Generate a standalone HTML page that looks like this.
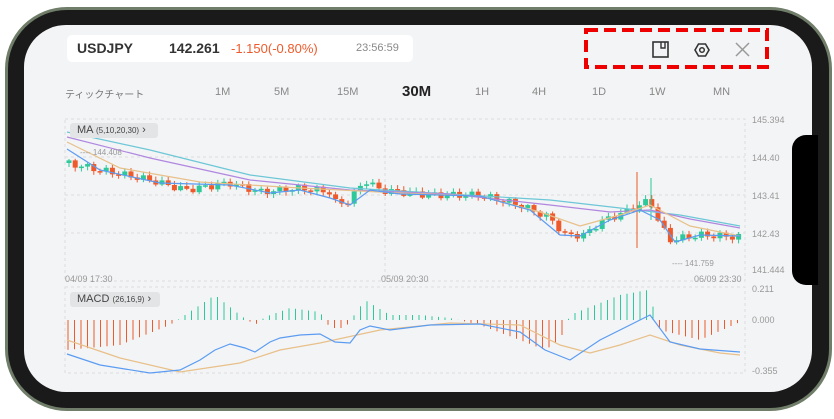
<!DOCTYPE html>
<html><head><meta charset="utf-8"><style>
*{margin:0;padding:0;box-sizing:border-box}
body{width:834px;height:419px;background:#fff;position:relative;overflow:hidden;font-family:"Liberation Sans","Noto Sans CJK JP",sans-serif}
.frame{position:absolute;left:5px;top:7px;width:827px;height:404px;border-radius:62px;background:#1a1a1a;border:3px solid #6f7d69}
.screen{position:absolute;left:24px;top:25px;width:788px;height:367px;border-radius:42px;background:#f3f4f6;overflow:hidden}
.notch{position:absolute;left:792px;top:135px;width:26px;height:150px;background:#000;border-radius:14px 0 0 14px}
.t{position:absolute;white-space:nowrap}
</style></head><body>
<div class="frame"></div>
<div class="screen"></div>
<div class="notch"></div>
<div class="t" style="left:67px;top:35px;width:346px;height:27px;background:#fff;border-radius:5px"></div>
<div class="t" style="left:77px;top:40px;font-size:14px;font-weight:bold;color:#333">USDJPY</div>
<div class="t" style="left:169px;top:40px;font-size:14px;font-weight:bold;color:#333">142.261</div>
<div class="t" style="left:231px;top:41px;font-size:13px;color:#ef5a2c">-1.150(-0.80%)</div>
<div class="t" style="left:356px;top:42px;font-size:11px;color:#888">23:56:59</div>
<svg class="t" style="left:0;top:0" width="834" height="419">
<rect x="586" y="30" width="181" height="37" fill="none" stroke="#e00" stroke-width="4" stroke-dasharray="12,6"/>
<rect x="653" y="42" width="15" height="15" fill="none" stroke="#333" stroke-width="1.6"/>
<path d="M661 42v6h4v-6" fill="none" stroke="#333" stroke-width="1.4"/>
<polygon points="695,50 698.5,44 705.5,44 709,50 705.5,56 698.5,56" fill="none" stroke="#333" stroke-width="1.6"/>
<circle cx="702" cy="50" r="2.3" fill="none" stroke="#333" stroke-width="1.5"/>
<path d="M736 43l13 13M749 43l-13 13" stroke="#999" stroke-width="1.5"/>
<g stroke="#ddd" stroke-dasharray="3,3" fill="none">
<rect x="65" y="119" width="680" height="162"/>
<line x1="65" y1="157" x2="745" y2="157"/><line x1="65" y1="195" x2="745" y2="195"/><line x1="65" y1="233" x2="745" y2="233"/>
<line x1="385" y1="119" x2="385" y2="281"/>
<rect x="65" y="287" width="680" height="86"/>
</g>
<g id="c"></g>
<g fill="none" stroke-width="1.2">
<polyline stroke="#6cc7d6" points="67,132 150,150 250,175 350,188 450,194 550,200 620,208 680,215 740,226"/>
<polyline stroke="#b087e0" points="67,137 150,158 250,180 350,190 450,194 550,205 610,212 650,210 690,219 740,228"/>
<polyline stroke="#e8c089" points="67,142 120,168 200,182 300,188 400,193 480,196 540,212 580,226 620,215 650,205 690,226 740,236"/>
<polyline stroke="#5b9cf2" points="67,149 100,170 160,183 230,185 270,193 300,190 330,198 350,205 370,190 400,194 480,196 530,210 560,235 580,236 610,220 640,210 660,220 675,242 700,235 740,236"/>
</g>
<g fill="none" stroke-width="1.2">
<polyline stroke="#e8c089" points="67,340 120,358 180,372 240,363 280,350 320,343 380,330 450,323 520,325 560,345 590,353 620,345 650,335 680,345 720,353 740,355"/>
<polyline stroke="#5b9cf2" points="67,354 100,365 150,373 180,370 200,360 215,350 230,344 245,348 255,352 270,342 280,338 300,335 320,334 335,342 350,343 360,330 370,326 390,330 430,325 480,324 520,332 545,350 570,360 600,340 630,325 650,315 670,342 700,349 740,352"/>
</g>
</svg>
<div class="t" style="left:70px;top:123px;width:88px;height:15px;background:#e3e4e6;border-radius:3px;font-size:11px;color:#444;padding:1px 7px">MA <span style="font-size:8px">(5,10,20,30)</span> ›</div>
<div class="t" style="left:70px;top:292px;width:90px;height:15px;background:#e3e4e6;border-radius:3px;font-size:11px;color:#444;padding:1px 7px">MACD <span style="font-size:8px">(26,16,9)</span> ›</div>
<div class="t" style="left:80px;top:148px;font-size:8px;color:#999">---- 144.408</div>
<div class="t" style="left:672px;top:259px;font-size:8px;color:#999">---- 141.759</div>
<div class="t" style="left:65px;top:86px;font-size:10px;color:#777">ティックチャート</div>
<div class="t" style="left:215px;top:86px;font-size:11px;color:#888">1M</div>
<div class="t" style="left:274px;top:86px;font-size:11px;color:#888">5M</div>
<div class="t" style="left:337px;top:86px;font-size:11px;color:#888">15M</div>
<div class="t" style="left:402px;top:83px;font-size:15px;font-weight:bold;color:#222">30M</div>
<div class="t" style="left:475px;top:86px;font-size:11px;color:#888">1H</div>
<div class="t" style="left:532px;top:86px;font-size:11px;color:#888">4H</div>
<div class="t" style="left:592px;top:86px;font-size:11px;color:#888">1D</div>
<div class="t" style="left:649px;top:86px;font-size:11px;color:#888">1W</div>
<div class="t" style="left:713px;top:86px;font-size:11px;color:#888">MN</div>
<div style="font-size:9px;color:#999">
<div class="t" style="left:752px;top:115px">145.394</div>
<div class="t" style="left:752px;top:153px">144.40</div>
<div class="t" style="left:752px;top:191px">143.41</div>
<div class="t" style="left:752px;top:229px">142.43</div>
<div class="t" style="left:752px;top:265px">141.444</div>
<div class="t" style="left:752px;top:284px">0.211</div>
<div class="t" style="left:752px;top:315px">0.000</div>
<div class="t" style="left:752px;top:366px">-0.355</div>
<div class="t" style="left:65px;top:274px">04/09 17:30</div>
<div class="t" style="left:381px;top:274px">05/09 20:30</div>
<div class="t" style="left:694px;top:274px">06/09 23:30</div>
</div>
<script>
var g=document.getElementById('c'),s='';
var P=[[67,163],[100,170],[150,180],[185,190],[230,183],[260,192],[300,188],[330,192],[337,205],[350,200],[365,180],[380,190],[430,195],[480,195],[500,200],[520,205],[550,218],[565,235],[585,235],[600,222],[630,210],[650,200],[660,225],[670,240],[700,235],[740,237]];
function f(x){for(var i=0;i<P.length-1;i++)if(x<=P[i+1][0]){var a=P[i],b=P[i+1];return a[1]+(b[1]-a[1])*(x-a[0])/(b[0]-a[0]);}return P[P.length-1][1];}
var prev=f(67);
for(var x=69;x<=740;x+=6.2){var c=f(x)+Math.sin(x*1.7)*3.5,o=prev,up=c<o,col=up?'#2ec99a':'#ee5a2b';var t=Math.min(o,c)-1-Math.abs(Math.sin(x))*3,b=Math.max(o,c)+1+Math.abs(Math.cos(x))*3;var h=Math.max(1.5,Math.abs(c-o));
s+='<line x1="'+x+'" x2="'+x+'" y1="'+t+'" y2="'+b+'" stroke="'+col+'"/><rect x="'+(x-2.5)+'" y="'+Math.min(o,c)+'" width="5" height="'+h+'" fill="'+col+'"/>';prev=c;}
s+='<line x1="637" x2="637" y1="172" y2="248" stroke="#ee5a2b"/><line x1="651" x2="651" y1="178" y2="220" stroke="#2ec99a"/>';
var H=[[67,-30],[120,-25],[170,-5],[185,5],[215,25],[240,5],[255,-5],[265,3],[290,12],[320,8],[330,-8],[345,-8],[365,20],[390,5],[420,5],[450,2],[480,-5],[520,-20],[545,-30],[560,-20],[570,5],[620,25],[648,30],[660,-10],[700,-20],[740,-2]];
function hf(x){for(var i=0;i<H.length-1;i++)if(x<=H[i+1][0]){var a=H[i],b=H[i+1];return a[1]+(b[1]-a[1])*(x-a[0])/(b[0]-a[0]);}return 0;}
for(var x=68;x<=740;x+=6.5){var v=hf(x);s+='<line x1="'+x+'" x2="'+x+'" y1="320" y2="'+(320-v)+'" stroke="'+(v>0?'#2ec99a':'#ee5a2b')+'"/>';}
g.innerHTML=s;
</script>
</body></html>
